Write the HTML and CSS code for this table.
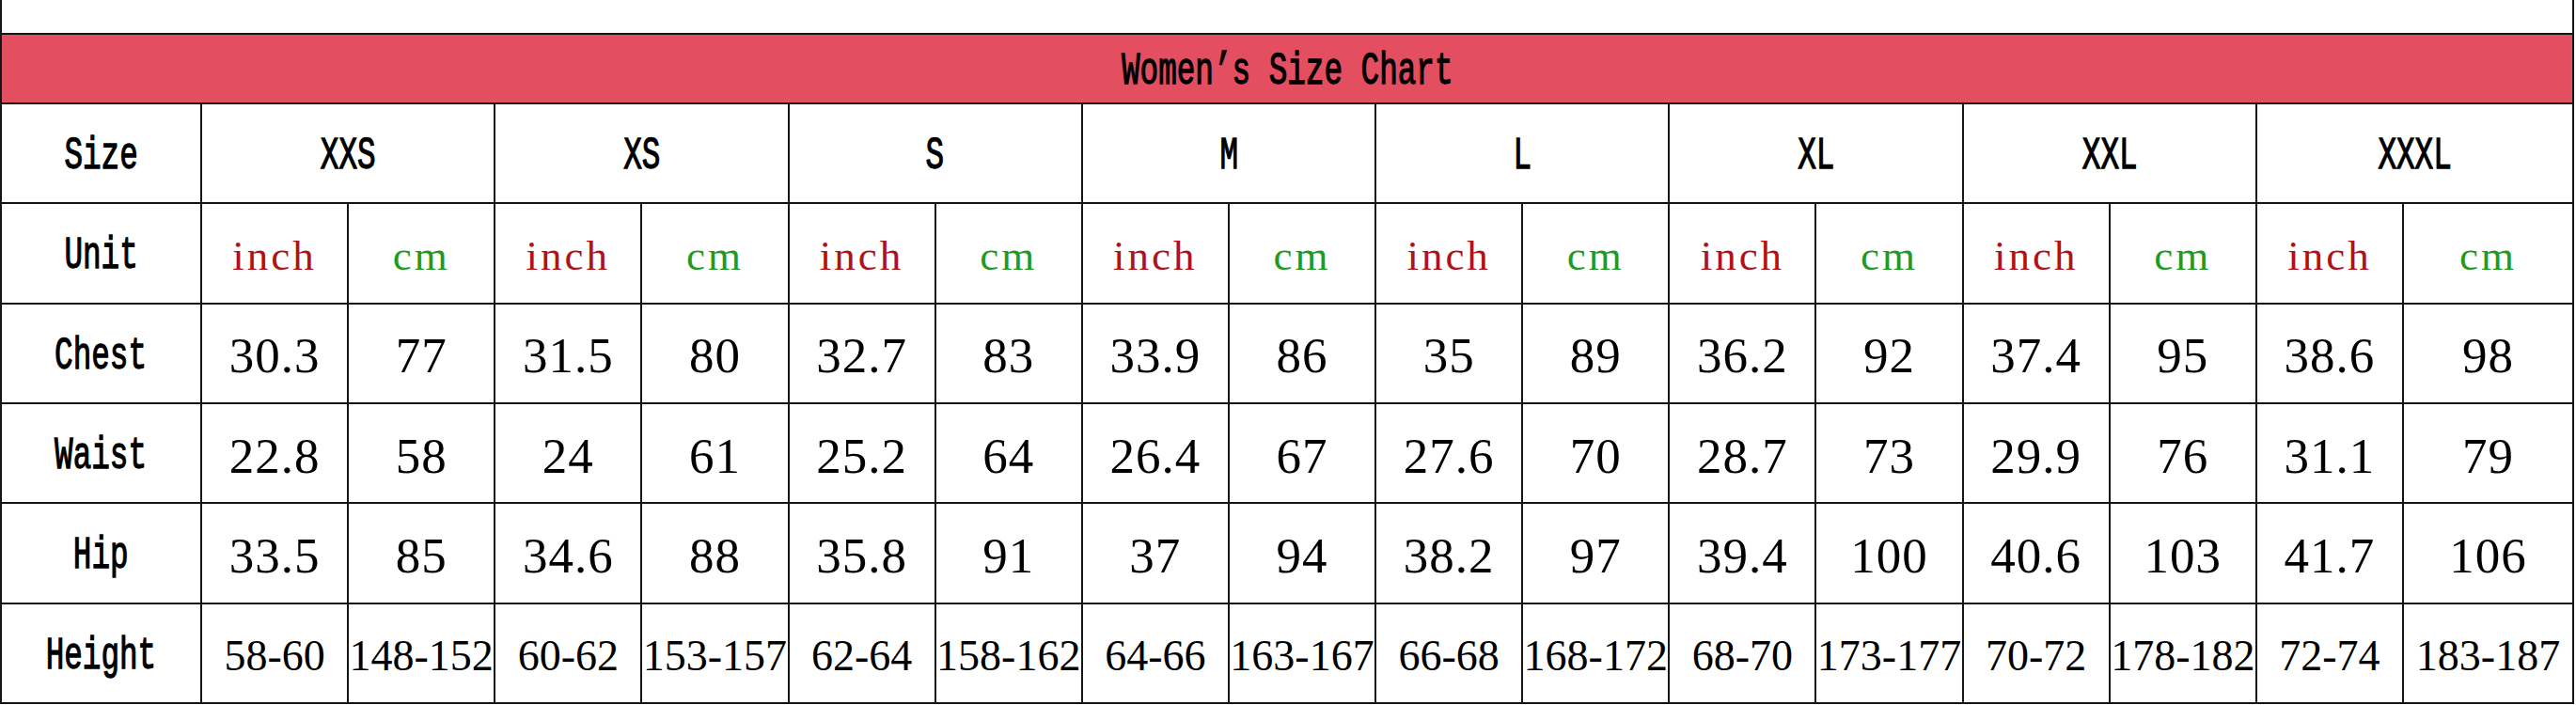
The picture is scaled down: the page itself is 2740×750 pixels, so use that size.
FILE: index.html
```html
<!DOCTYPE html>
<html lang="en">
<head>
<meta charset="utf-8">
<title>Women's Size Chart</title>
<link rel="stylesheet" href="styles.css">
</head>
<body>
<div class="sheet">
  <div class="blank"></div>
  <div class="title"><span class="mono">Women’s Size Chart</span></div>

  <div class="cell label"><span class="mono">Size</span></div>
  <div class="cell size"><span class="mono">XXS</span></div>
  <div class="cell size"><span class="mono">XS</span></div>
  <div class="cell size"><span class="mono">S</span></div>
  <div class="cell size"><span class="mono">M</span></div>
  <div class="cell size"><span class="mono">L</span></div>
  <div class="cell size"><span class="mono">XL</span></div>
  <div class="cell size"><span class="mono">XXL</span></div>
  <div class="cell size"><span class="mono">XXXL</span></div>

  <div class="cell label"><span class="mono">Unit</span></div>
  <div class="cell unit inch">inch</div><div class="cell unit cm">cm</div>
  <div class="cell unit inch">inch</div><div class="cell unit cm">cm</div>
  <div class="cell unit inch">inch</div><div class="cell unit cm">cm</div>
  <div class="cell unit inch">inch</div><div class="cell unit cm">cm</div>
  <div class="cell unit inch">inch</div><div class="cell unit cm">cm</div>
  <div class="cell unit inch">inch</div><div class="cell unit cm">cm</div>
  <div class="cell unit inch">inch</div><div class="cell unit cm">cm</div>
  <div class="cell unit inch">inch</div><div class="cell unit cm">cm</div>

  <div class="cell label"><span class="mono">Chest</span></div>
  <div class="cell num">30.3</div><div class="cell num">77</div>
  <div class="cell num">31.5</div><div class="cell num">80</div>
  <div class="cell num">32.7</div><div class="cell num">83</div>
  <div class="cell num">33.9</div><div class="cell num">86</div>
  <div class="cell num">35</div><div class="cell num">89</div>
  <div class="cell num">36.2</div><div class="cell num">92</div>
  <div class="cell num">37.4</div><div class="cell num">95</div>
  <div class="cell num">38.6</div><div class="cell num">98</div>

  <div class="cell label"><span class="mono">Waist</span></div>
  <div class="cell num">22.8</div><div class="cell num">58</div>
  <div class="cell num">24</div><div class="cell num">61</div>
  <div class="cell num">25.2</div><div class="cell num">64</div>
  <div class="cell num">26.4</div><div class="cell num">67</div>
  <div class="cell num">27.6</div><div class="cell num">70</div>
  <div class="cell num">28.7</div><div class="cell num">73</div>
  <div class="cell num">29.9</div><div class="cell num">76</div>
  <div class="cell num">31.1</div><div class="cell num">79</div>

  <div class="cell label"><span class="mono">Hip</span></div>
  <div class="cell num">33.5</div><div class="cell num">85</div>
  <div class="cell num">34.6</div><div class="cell num">88</div>
  <div class="cell num">35.8</div><div class="cell num">91</div>
  <div class="cell num">37</div><div class="cell num">94</div>
  <div class="cell num">38.2</div><div class="cell num">97</div>
  <div class="cell num">39.4</div><div class="cell num">100</div>
  <div class="cell num">40.6</div><div class="cell num">103</div>
  <div class="cell num">41.7</div><div class="cell num">106</div>

  <div class="cell label"><span class="mono">Height</span></div>
  <div class="cell num range">58-60</div><div class="cell num range">148-152</div>
  <div class="cell num range">60-62</div><div class="cell num range">153-157</div>
  <div class="cell num range">62-64</div><div class="cell num range">158-162</div>
  <div class="cell num range">64-66</div><div class="cell num range">163-167</div>
  <div class="cell num range">66-68</div><div class="cell num range">168-172</div>
  <div class="cell num range">68-70</div><div class="cell num range">173-177</div>
  <div class="cell num range">70-72</div><div class="cell num range">178-182</div>
  <div class="cell num range">72-74</div><div class="cell num range">183-187</div>
</div>
</body>
</html>
```
FILE: styles.css
```css
html, body {
  margin: 0;
  padding: 0;
  background: #fff;
}

.sheet {
  width: 2738px;
  height: 749px;
  box-sizing: border-box;
  display: grid;
  grid-template-columns: 211px repeat(15, 1fr) 179px;
  grid-template-rows: 35px 72px repeat(6, 1fr);
  gap: 2px;
  padding: 0 2px 2px 2px;
  background: #151515;
}

.blank {
  grid-column: 1 / -1;
  background: #fff;
}

.title {
  grid-column: 1 / -1;
  background: #e34e60;
  display: flex;
  align-items: center;
  justify-content: center;
  padding-top: 6px;
}

.cell {
  background: #fff;
  display: flex;
  align-items: center;
  justify-content: center;
  white-space: nowrap;
  overflow: visible;
  color: #000;
  padding-top: 6px;
}

.mono {
  display: inline-block;
  font-family: "Liberation Mono", "DejaVu Sans Mono", monospace;
  font-weight: normal;
  font-size: 48px;
  line-height: 1;
  color: #000;
  -webkit-text-stroke: 1.3px #000;
  transform: scaleX(0.68);
}

.size {
  grid-column: span 2;
}

.unit {
  font-family: "Liberation Serif", serif;
  font-size: 45px;
  letter-spacing: 3px;
  line-height: 1;
}

.inch {
  color: #b0121a;
}

.cm {
  color: #1f9a22;
}

.num {
  font-family: "Liberation Serif", serif;
  font-size: 53px;
  line-height: 1;
  letter-spacing: 1px;
}

.range {
  font-size: 46px;
  letter-spacing: 0;
}
```
